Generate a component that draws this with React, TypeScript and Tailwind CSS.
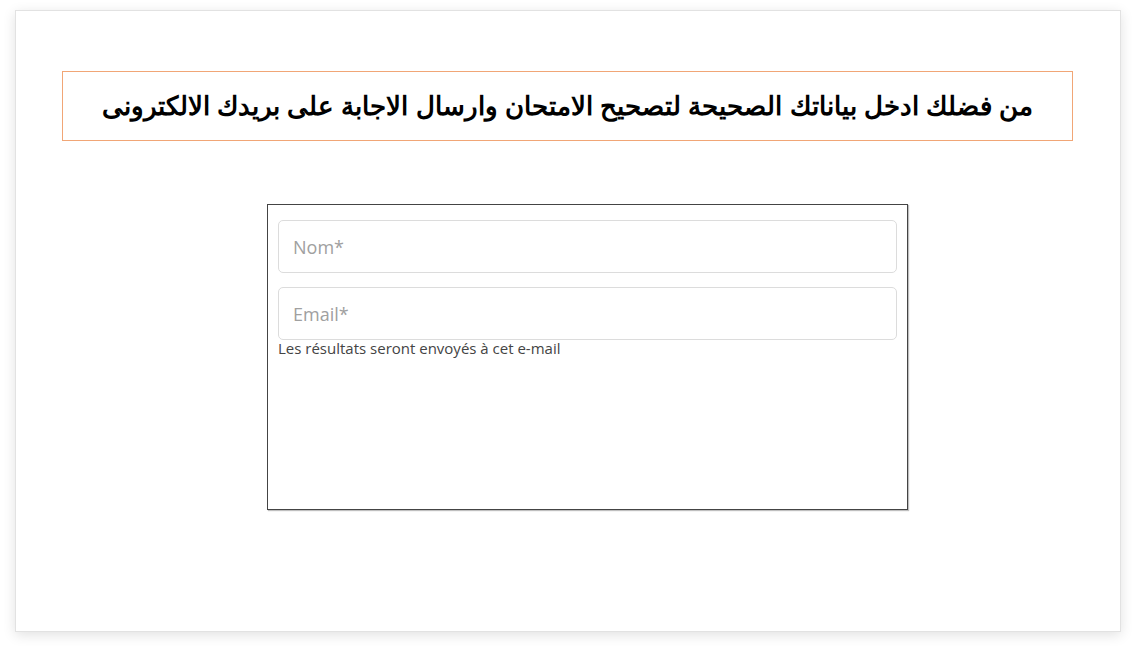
import React from 'react';

export default function App() {
    return (
        <div className="w-[1136px] h-[652px] bg-white pt-[10px] pl-[15px]">
            <div className="w-[1106px] h-[622px] bg-white border border-[#e2e2e2] shadow-[0_3px_12px_rgba(0,0,0,0.12)] pt-[60px] pl-[46px] pr-[47px]">
                {/* Header message */}
                <div className="h-[70px] border border-[#f1a676] flex items-center justify-center">
                    <h1
                        dir="rtl"
                        className="text-[26px] font-bold text-black font-['Liberation_Sans',Arial,sans-serif] leading-none"
                    >
                        من فضلك ادخل بياناتك الصحيحة لتصحيح الامتحان وارسال الاجابة على بريدك الالكترونى
                    </h1>
                </div>

                {/* Form */}
                <div className="mt-[63px] ml-[205px] w-[641px] h-[306px] border border-[#444] shadow-[1px_1px_1px_rgba(0,0,0,0.25)] px-[10px] pt-[15px] font-['Open_Sans',sans-serif]">
                    <input
                        type="text"
                        placeholder="Nom*"
                        className="w-full h-[53px] rounded-[5px] border border-[#dcdcdc] px-[14px] text-[18px] text-[#333] placeholder:text-[#a0a0a0] outline-none"
                    />
                    <input
                        type="email"
                        placeholder="Email*"
                        className="mt-[14px] w-full h-[53px] rounded-[5px] border border-[#dcdcdc] px-[14px] text-[18px] text-[#333] placeholder:text-[#a0a0a0] outline-none"
                    />
                    <p className="text-[15px] text-[#444] leading-[18px] -mt-px">Les résultats seront envoyés à cet e-mail</p>
                </div>
            </div>
        </div>
    );
}
